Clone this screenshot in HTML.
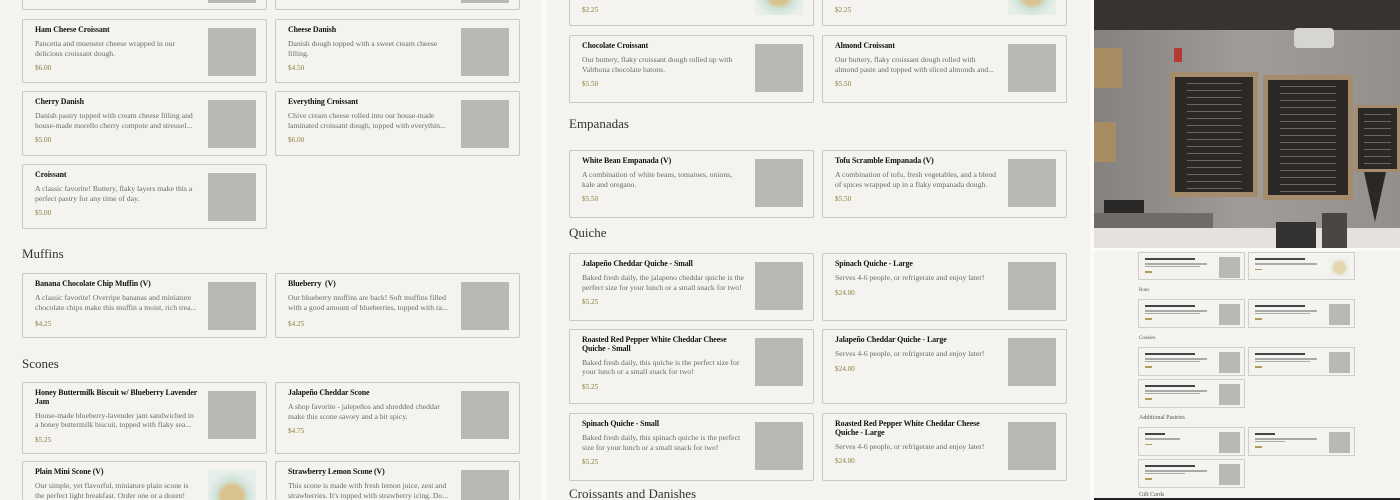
<!DOCTYPE html>
<html><head><meta charset="utf-8"><style>
*{margin:0;padding:0;box-sizing:border-box}
html{overflow:hidden;width:1400px;height:500px}
body{width:1400px;height:500px;overflow:hidden;background:#f4f3ef;position:relative;font-family:"Liberation Serif",serif}
.p{position:absolute;overflow:hidden;background:#f4f3ef}
.c{position:absolute;width:245px;border:1px solid #c9c7c1;border-radius:2px;background:#f4f3ef;padding:6px 68px 0 12px}
.c .t{font-weight:bold;font-size:7.9px;line-height:8.5px;color:#111;letter-spacing:-.1px}
.c .d{font-size:7.7px;line-height:9.5px;color:#6b6965;margin-top:4.5px}
.c .pr{font-size:7.2px;line-height:9px;color:#8c7d3a;margin-top:6px}
.c .im{position:absolute;left:185px;top:8px;width:48px;height:48px;background:#b9b8b4}
.c .im.g{background:radial-gradient(circle at 50% 55%,#d9c48f 0 30%,#cfe3d9 45%,#e8eeea 70%)}
.h{position:absolute;font-size:13px;color:#333;font-family:"Liberation Serif",serif}
.sep{position:absolute;top:0;height:500px;background:#fbfbf9}
.tc{position:absolute;width:107px;border:1px solid #d0cec8;background:#f4f3ef;padding:3px 30px 0 6px}
.tc i{display:block;height:2px;background:#444;width:50px;margin-top:2px}
.tc b{display:block;height:1.5px;background:#aaa;width:62px;margin-top:3px}
.tc u{display:block;height:1.5px;background:#b09c55;width:7px;margin-top:4px}
.tc s{position:absolute;left:80px;top:4px;width:21px;height:21px;background:#b9b8b4}
.th{position:absolute;font-size:5px;color:#555;left:1139px}
.cb{position:absolute;background:#a58c6c;padding:5px}
.cb div{width:100%;height:100%;background:#2b2826;background-image:repeating-linear-gradient(180deg,transparent 0 6px,rgba(220,220,210,.35) 6px 7px);background-size:70% 100%;background-repeat:no-repeat;background-position:center}
</style></head><body>

<div class="p" style="left:0;top:0;width:541px;height:500px">
<div class="c" style="left:22px;top:-54px;height:64px"><div class="im"></div></div>
<div class="c" style="left:275px;top:-54px;height:64px"><div class="im"></div></div>

<div class="c" style="left:22px;top:19px;height:64px"><div class="t">Ham Cheese Croissant</div><div class="d">Pancetta and muenster cheese wrapped in our delicious croissant dough.</div><div class="pr">$6.00</div><div class="im"></div></div>
<div class="c" style="left:275px;top:19px;height:64px"><div class="t">Cheese Danish</div><div class="d">Danish dough topped with a sweet cream cheese filling.</div><div class="pr">$4.50</div><div class="im"></div></div>

<div class="c" style="left:22px;top:91px;height:65px"><div class="t">Cherry Danish</div><div class="d">Danish pastry topped with cream cheese filling and house-made morello cherry compote and streusel...</div><div class="pr">$5.00</div><div class="im"></div></div>
<div class="c" style="left:275px;top:91px;height:65px"><div class="t">Everything Croissant</div><div class="d">Chive cream cheese rolled into our house-made laminated croissant dough, topped with everythin...</div><div class="pr">$6.00</div><div class="im"></div></div>

<div class="c" style="left:22px;top:164px;height:65px"><div class="t">Croissant</div><div class="d">A classic favorite! Buttery, flaky layers make this a perfect pastry for any time of day.</div><div class="pr">$5.00</div><div class="im"></div></div>

<div class="h" style="left:22px;top:246px">Muffins</div>
<div class="c" style="left:22px;top:273px;height:65px"><div class="t">Banana Chocolate Chip Muffin (V)</div><div class="d">A classic favorite! Overripe bananas and miniature chocolate chips make this muffin a moist, rich trea...</div><div class="pr" style="margin-top:8px">$4.25</div><div class="im"></div></div>
<div class="c" style="left:275px;top:273px;height:65px"><div class="t">Blueberry &nbsp;(V)</div><div class="d">Our blueberry muffins are back! Soft muffins filled with a good amount of blueberries, topped with ra...</div><div class="pr" style="margin-top:8px">$4.25</div><div class="im"></div></div>

<div class="h" style="left:22px;top:356px">Scones</div>
<div class="c" style="left:22px;top:382px;height:72px"><div class="t">Honey Buttermilk Biscuit w/ Blueberry Lavender Jam</div><div class="d">House-made blueberry-lavender jam sandwiched in a honey buttermilk biscuit, topped with flaky sea...</div><div class="pr">$5.25</div><div class="im"></div></div>
<div class="c" style="left:275px;top:382px;height:72px"><div class="t">Jalapeño Cheddar Scone</div><div class="d">A shop favorite - jalepeños and shredded cheddar make this scone savory and a bit spicy.</div><div class="pr">$4.75</div><div class="im"></div></div>

<div class="c" style="left:22px;top:461px;height:39px;border-bottom:none"><div class="t">Plain Mini Scone (V)</div><div class="d">Our simple, yet flavorful, miniature plain scone is the perfect light breakfast. Order one or a dozen!</div><div class="im g"></div></div>
<div class="c" style="left:275px;top:461px;height:39px;border-bottom:none"><div class="t">Strawberry Lemon Scone (V)</div><div class="d">This scone is made with fresh lemon juice, zest and strawberries. It's topped with strawberry icing. Do...</div><div class="im"></div></div>
</div>

<div class="sep" style="left:541px;width:6px"></div>

<div class="p" style="left:547px;top:0;width:543px;height:500px">
<div class="c" style="left:22px;top:-42px;height:68px"><div class="pr" style="position:absolute;top:47px;left:12px;margin:0">$2.25</div><div class="im g"></div></div>
<div class="c" style="left:275px;top:-42px;height:68px"><div class="pr" style="position:absolute;top:47px;left:12px;margin:0">$2.25</div><div class="im g"></div></div>

<div class="c" style="left:22px;top:35px;height:68px"><div class="t">Chocolate Croissant</div><div class="d">Our buttery, flaky croissant dough rolled up with Valrhona chocolate batons.</div><div class="pr">$5.50</div><div class="im"></div></div>
<div class="c" style="left:275px;top:35px;height:68px"><div class="t">Almond Croissant</div><div class="d">Our buttery, flaky croissant dough rolled with almond paste and topped with sliced almonds and...</div><div class="pr">$5.50</div><div class="im"></div></div>

<div class="h" style="left:22px;top:116px">Empanadas</div>
<div class="c" style="left:22px;top:150px;height:68px"><div class="t">White Bean Empanada (V)</div><div class="d">A combination of white beans, tomatoes, onions, kale and oregano.</div><div class="pr">$5.50</div><div class="im"></div></div>
<div class="c" style="left:275px;top:150px;height:68px"><div class="t">Tofu Scramble Empanada (V)</div><div class="d">A combination of tofu, fresh vegetables, and a blend of spices wrapped up in a flaky empanada dough.</div><div class="pr">$5.50</div><div class="im"></div></div>

<div class="h" style="left:22px;top:225px">Quiche</div>
<div class="c" style="left:22px;top:253px;height:68px"><div class="t">Jalapeño Cheddar Quiche - Small</div><div class="d">Baked fresh daily, the jalapeno cheddar quiche is the perfect size for your lunch or a small snack for two!</div><div class="pr">$5.25</div><div class="im"></div></div>
<div class="c" style="left:275px;top:253px;height:68px"><div class="t">Spinach Quiche - Large</div><div class="d">Serves 4-6 people, or refrigerate and enjoy later!</div><div class="pr">$24.00</div><div class="im"></div></div>

<div class="c" style="left:22px;top:329px;height:75px"><div class="t">Roasted Red Pepper White Cheddar Cheese Quiche - Small</div><div class="d">Baked fresh daily, this quiche is the perfect size for your lunch or a small snack for two!</div><div class="pr">$5.25</div><div class="im"></div></div>
<div class="c" style="left:275px;top:329px;height:75px"><div class="t">Jalapeño Cheddar Quiche - Large</div><div class="d">Serves 4-6 people, or refrigerate and enjoy later!</div><div class="pr">$24.00</div><div class="im"></div></div>

<div class="c" style="left:22px;top:413px;height:68px"><div class="t">Spinach Quiche - Small</div><div class="d">Baked fresh daily, this spinach quiche is the perfect size for your lunch or a small snack for two!</div><div class="pr">$5.25</div><div class="im"></div></div>
<div class="c" style="left:275px;top:413px;height:68px"><div class="t">Roasted Red Pepper White Cheddar Cheese Quiche - Large</div><div class="d">Serves 4-6 people, or refrigerate and enjoy later!</div><div class="pr">$24.00</div><div class="im"></div></div>

<div class="h" style="left:22px;top:486px">Croissants and Danishes</div>
</div>

<div class="sep" style="left:1090px;width:4px"></div>

<div class="p" style="left:1094px;top:0;width:306px;height:248px;background:#8f8a88">
<div style="position:absolute;left:0;top:0;width:306px;height:30px;background:#37332f"></div>
<div style="position:absolute;left:0;top:30px;width:306px;height:200px;background:linear-gradient(90deg,#85817f,#a19c9a 50%,#938f8d)"></div>
<div style="position:absolute;left:200px;top:28px;width:40px;height:20px;background:#d7d5d2;border-radius:4px"></div>
<div style="position:absolute;left:80px;top:48px;width:8px;height:14px;background:#b43a35"></div>
<div style="position:absolute;left:0;top:48px;width:28px;height:40px;background:#a78c62"></div>
<div style="position:absolute;left:0;top:122px;width:22px;height:40px;background:#a78c62"></div>
<div class="cb" style="left:76px;top:72px;width:88px;height:125px"><div></div></div>
<div class="cb" style="left:169px;top:75px;width:90px;height:125px"><div></div></div>
<div class="cb" style="left:261px;top:105px;width:45px;height:67px;padding:3px"><div></div></div>
<div style="position:absolute;left:270px;top:172px;width:22px;height:50px;background:#2a2826;clip-path:polygon(0 0,100% 0,50% 100%)"></div>
<div style="position:absolute;left:0;top:213px;width:119px;height:15px;background:#6f6b66"></div>
<div style="position:absolute;left:10px;top:200px;width:40px;height:13px;background:#2a2826"></div>
<div style="position:absolute;left:0;top:228px;width:306px;height:20px;background:#e5e2dd"></div>
<div style="position:absolute;left:182px;top:222px;width:40px;height:26px;background:#333"></div>
<div style="position:absolute;left:228px;top:213px;width:25px;height:35px;background:#4a4644"></div>
</div>
<div style="position:absolute;left:1094px;top:248px;width:306px;height:3px;background:#fbfbf9"></div>

<div class="p" style="left:1094px;top:251px;width:306px;height:248px"></div>
<div class="tc" style="left:1138px;top:252px;height:28px"><i></i><b></b><b style="width:55px;margin-top:1px"></b><u></u><s></s></div>
<div class="tc" style="left:1248px;top:252px;height:28px"><i></i><b></b><u></u><s style="background:radial-gradient(circle,#e3d6ad 0 35%,#eef0ec 60%)"></s></div>
<div class="th" style="top:288px">Buns</div>
<div class="tc" style="left:1138px;top:299px;height:29px"><i></i><b></b><b style="width:55px;margin-top:1px"></b><u></u><s></s></div>
<div class="tc" style="left:1248px;top:299px;height:29px"><i></i><b></b><b style="width:55px;margin-top:1px"></b><u></u><s></s></div>
<div class="th" style="top:336px">Cookies</div>
<div class="tc" style="left:1138px;top:347px;height:29px"><i></i><b></b><b style="width:55px;margin-top:1px"></b><u></u><s></s></div>
<div class="tc" style="left:1248px;top:347px;height:29px"><i></i><b></b><b style="width:55px;margin-top:1px"></b><u></u><s></s></div>
<div class="tc" style="left:1138px;top:379px;height:29px"><i></i><b></b><b style="width:55px;margin-top:1px"></b><u></u><s></s></div>
<div class="th" style="top:415px;font-size:6px">Additional Pastries</div>
<div class="tc" style="left:1138px;top:427px;height:29px"><i style="width:20px"></i><b style="width:35px"></b><u></u><s></s></div>
<div class="tc" style="left:1248px;top:427px;height:29px"><i style="width:20px"></i><b></b><b style="width:30px;margin-top:1px"></b><u></u><s></s></div>
<div class="tc" style="left:1138px;top:459px;height:29px"><i></i><b></b><b style="width:40px;margin-top:1px"></b><u></u><s></s></div>
<div class="th" style="top:492px;font-size:6px">Gift Cards</div>
<div style="position:absolute;left:1094px;top:498px;width:306px;height:2px;background:#222"></div>
</body></html>
